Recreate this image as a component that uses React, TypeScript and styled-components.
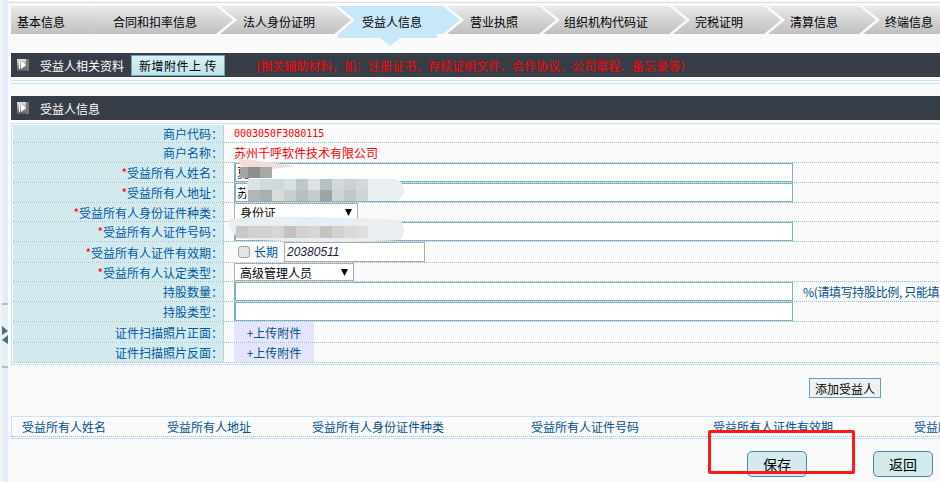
import React from "react";
import styled, { createGlobalStyle } from "styled-components";

const Global = createGlobalStyle`
  html, body { margin: 0; padding: 0; background: #fafafa; }
  * { box-sizing: border-box; }
`;

const CJK = `"Noto Sans CJK SC", "Liberation Sans", sans-serif`;

const Page = styled.div`
  position: relative;
  display: flex;
  width: 940px;
  height: 482px;
  overflow: hidden;
  background: #fafafa;
  font-family: ${CJK};
  font-size: 12px;
  line-height: 14px;
`;

const Rail = styled.div`
  flex: 0 0 8px;
  display: flex;
  flex-direction: column;
  align-items: flex-end;
  padding-top: 303px;
  background: linear-gradient(90deg, #f3f3f3 0 3px, #e3eafc 3px 8px);
`;

const RailHandle = styled.svg`
  display: block;
  width: 8px;
  height: 65px;
`;

const Main = styled.div`
  flex: 1;
  min-width: 0;
  display: flex;
  flex-direction: column;
`;

const TopLine = styled.div`
  height: 1px;
  margin: 2px 0 3px;
  background: #dcdcdc;
`;

const Body = styled.div`
  display: flex;
  flex-direction: column;
  padding-left: 3px;
`;

const Tabs = styled.div`
  display: flex;
  height: 28px;
`;

const TabItem = styled.div<{ $w: number }>`
  position: relative;
  flex: 0 0 ${(p) => p.$w}px;
  margin-right: -17px;
`;

const TabShape = styled.div<{ $active?: boolean; $first?: boolean; $indent: number }>`
  height: 28px;
  display: flex;
  align-items: center;
  padding: 3px 0 0 ${(p) => p.$indent}px;
  color: #000;
  white-space: nowrap;
  background: ${(p) => (p.$active ? "#c8e7f9" : "linear-gradient(180deg, #e9e9e9, #bfbfbf)")};
  clip-path: ${(p) =>
    p.$first
      ? "polygon(0 0, calc(100% - 17px) 0, 100% 50%, calc(100% - 17px) 100%, 0 100%)"
      : "polygon(0 0, calc(100% - 21px) 0, calc(100% - 4px) 50%, calc(100% - 21px) 100%, 0 100%, 17px 50%)"};
`;

const TabPointer = styled.div`
  position: absolute;
  left: 0;
  top: 28px;
  width: 99px;
  height: 12px;
  background: #c8e7f9;
  clip-path: polygon(0 0, 100% 0, 100% 4px, 62px 4px, 52px 12px, 42px 4px, 0 4px);
`;

const Bar = styled.div<{ $top: number }>`
  display: flex;
  align-items: center;
  height: 24px;
  margin-top: ${(p) => p.$top}px;
  padding-left: 6px;
  background: #363d47;
  color: #fff;
  white-space: nowrap;
`;

const BarLabel = styled.span`
  padding-top: 1px;
`;

const BarIcon = styled.svg`
  flex: 0 0 12px;
  width: 12px;
  height: 12px;
  margin-right: 11px;
`;

const UploadExtra = styled.div`
  display: flex;
  align-items: center;
  justify-content: center;
  width: 94px;
  height: 21px;
  margin-left: 7px;
  padding-top: 1px;
  color: #000;
  letter-spacing: 0.5px;
  border: 1px solid #6fa7b8;
  background: linear-gradient(180deg, #d9f0f5, #bfe3ea);
`;

const BarNote = styled.span`
  margin-left: 31px;
  padding-top: 1px;
  color: #ff0000;
`;

const ThinBox = styled.div`
  height: 4px;
  margin: 3px -10px 0 0;
  border: 1px solid #c8e0f8;
  border-width: 1px 0;
`;

const FormBox = styled.div`
  margin: 3px -10px 0 0;
  padding: 1px 0 1px 1px;
  border: 1px solid #c8e0f8;
`;

const Row = styled.div<{ $h: number }>`
  display: flex;
  height: ${(p) => p.$h}px;
  border-bottom: 1px dotted #93bccb;
`;

const Label = styled.div`
  flex: 0 0 211px;
  display: flex;
  align-items: center;
  justify-content: flex-end;
  padding-top: 1px;
  background: #d2eaee;
  border-right: 1px dotted #93bccb;
  color: #0058a0;
  white-space: nowrap;
`;

const Star = styled.span`
  color: #ff0000;
`;

const Value = styled.div`
  flex: 1;
  min-width: 0;
  display: flex;
  align-items: center;
  padding-left: 10px;
  white-space: nowrap;
`;

const Code = styled.span`
  padding-top: 1px;
  color: #ff0000;
  font-family: "DejaVu Sans Mono", monospace;
  font-size: 10px;
`;

const RedName = styled.span`
  padding-top: 1px;
  color: #ff0000;
`;

const TextInput = styled.input`
  flex: 0 0 559px;
  height: 19px;
  padding: 0 1px;
  margin: 0;
  border: 1px solid #7fb0bf;
  border-left-width: 2px;
  outline: none;
  background: #fff;
  color: #000;
  font: 12px ${CJK};
`;

const FakeSelect = styled.div<{ $w: number }>`
  display: flex;
  align-items: center;
  justify-content: space-between;
  width: ${(p) => p.$w}px;
  height: 18px;
  padding: 1px 5px 0;
  background: #fff;
  border: 1px solid #a9a9a9;
  color: #000;
`;

const Caret = styled.svg`
  width: 7px;
  height: 7px;
`;

const Check = styled.input`
  appearance: none;
  width: 12px;
  height: 12px;
  margin: 0 4px 0 4px;
  background: #e4e4e4;
  border: 1px solid #a3a3a3;
  border-radius: 3px;
`;

const Long = styled.span`
  color: #0058a0;
  margin-right: 6px;
`;

const DateInput = styled.input`
  width: 141px;
  height: 20px;
  padding: 0 2px;
  margin: 0;
  background: #fff;
  border: 1px solid #a9a9a9;
  outline: none;
  color: #1a1a40;
  font: italic 12px "Liberation Sans", sans-serif;
`;

const Hint = styled.span`
  flex: 0 0 auto;
  margin-left: 10px;
  padding-top: 1px;
  color: #00508c;
  letter-spacing: -0.35px;
`;

const UploadCell = styled.div`
  display: flex;
  align-items: center;
  justify-content: center;
  width: 80px;
  height: 100%;
  padding-top: 1px;
  background: #e4e4fa;
  color: #00508c;
`;

const ActionRow = styled.div`
  display: flex;
  justify-content: flex-end;
  padding: 13px 59px 0 0;
`;

const AddButton = styled.button`
  width: 72px;
  height: 20px;
  padding: 0;
  background: #f0f0f0;
  border: 1px solid #5f9fd0;
  color: #000;
  font: 12px ${CJK};
`;

const ListHead = styled.div`
  margin: 18px -10px 0 0;
  height: 23px;
  padding-bottom: 1px;
  border: 1px solid #c8e0f8;
  border-right: 0;
`;

const ListRow = styled.div`
  display: flex;
  align-items: center;
  height: 20px;
  border-bottom: 1px dotted #93bccb;
  color: #00508c;
  white-space: nowrap;
`;

const ListCell = styled.div<{ $w: number }>`
  flex: 0 0 ${(p) => p.$w}px;
  padding-left: 10px;
`;

const Footer = styled.div`
  display: flex;
  justify-content: flex-end;
  gap: 66px;
  padding: 12px 7px 0 0;
`;

const RoundButton = styled.button`
  width: 60px;
  height: 26px;
  padding: 0;
  background: #d2eaee;
  border: 1px solid #4f85ad;
  border-radius: 5px;
  color: #000;
  font: 14px ${CJK};
`;

const Redaction = styled.svg`
  position: absolute;
  left: 0;
  top: 0;
  width: 940px;
  height: 482px;
  pointer-events: none;
`;

const Annotation = styled.div`
  position: absolute;
  left: 708px;
  top: 430px;
  width: 147px;
  height: 44px;
  border: 3px solid #ff1a1a;
  border-radius: 2px;
  pointer-events: none;
`;

const tabs = [
  { t: "基本信息", left: 11, text: 17 },
  { t: "合同和扣率信息", left: 88, text: 113 },
  { t: "法人身份证明", left: 220, text: 243 },
  { t: "受益人信息", left: 338, text: 362, active: true },
  { t: "营业执照", left: 447, text: 470 },
  { t: "组织机构代码证", left: 543, text: 564 },
  { t: "完税证明", left: 673, text: 695 },
  { t: "清算信息", left: 768, text: 790 },
  { t: "终端信息", left: 863, text: 885 },
];

const SectionIcon = ({ id }: { id: string }) => (
  <BarIcon viewBox="0 0 12 12">
    <defs>
      <linearGradient id={id} x1="0" y1="0" x2="0" y2="1">
        <stop offset="0" stopColor="#e4e4e4" />
        <stop offset="1" stopColor="#5a5a5a" />
      </linearGradient>
    </defs>
    <rect width="12" height="12" fill={`url(#${id})`} />
    <rect x="9" width="3" height="12" fill="#777" />
    <path d="M4 2 L9 6 L4 10 Z" fill="#fff" />
    <rect x="2" y="2" width="1" height="8" fill="#fff" />
  </BarIcon>
);

const CaretIcon = () => (
  <Caret viewBox="0 0 7 7">
    <path d="M0 0 H7 L3.5 7 Z" fill="#000" />
  </Caret>
);

const Mosaic = ({ x, y, h, colors }: { x: number; y: number; h: number; colors: string[] }) => (
  <>
    {colors.map((c, i) => (
      <rect key={i} x={x + i * 12} y={y} width="12" height={h} fill={c} />
    ))}
  </>
);

const listCols = [
  { t: "受益所有人姓名", w: 145 },
  { t: "受益所有人地址", w: 145 },
  { t: "受益所有人身份证件种类", w: 219 },
  { t: "受益所有人证件号码", w: 182 },
  { t: "受益所有人证件有效期", w: 201 },
  { t: "受益所有人", w: 80 },
];

export default function App() {
  return (
    <Page>
      <Global />
      <Rail>
        <RailHandle viewBox="0 0 8 65">
          <rect x="1" y="0" width="7" height="65" fill="#e6f0f3" />
          <rect x="2" y="0" width="6" height="2" fill="#b8bcbc" />
          <rect x="2" y="63" width="6" height="2" fill="#b8bcbc" />
          <path d="M2 23 L8 28 L2 32 Z" fill="#44707f" />
          <path d="M8 32 L2 37 L8 41 Z" fill="#44707f" />
        </RailHandle>
      </Rail>
      <Main>
        <TopLine />
        <Body>
          <Tabs>
            {tabs.map((tab, i) => {
              const next = tabs[i + 1] ? tabs[i + 1].left : 958;
              return (
                <TabItem key={tab.t} $w={next - tab.left + 17}>
                  <TabShape $active={tab.active} $first={i === 0} $indent={tab.text - tab.left}>
                    {tab.t}
                  </TabShape>
                  {tab.active && <TabPointer />}
                </TabItem>
              );
            })}
          </Tabs>
          <Bar $top={19}>
            <SectionIcon id="ic1" />
            <BarLabel>受益人相关资料</BarLabel>
            <UploadExtra>新增附件上 传</UploadExtra>
            <BarNote>(相关辅助材料，如：注册证书、存续证明文件、合作协议、公司章程、备忘录等）</BarNote>
          </Bar>
          <ThinBox />
          <Bar $top={12}>
            <SectionIcon id="ic2" />
            <BarLabel>受益人信息</BarLabel>
          </Bar>
          <FormBox>
            <Row $h={18}>
              <Label>商户代码：</Label>
              <Value><Code>0003050F3080115</Code></Value>
            </Row>
            <Row $h={20}>
              <Label>商户名称：</Label>
              <Value><RedName>苏州千呼软件技术有限公司</RedName></Value>
            </Row>
            <Row $h={20}>
              <Label><Star>*</Star>受益所有人姓名：</Label>
              <Value><TextInput readOnly value="夏" /></Value>
            </Row>
            <Row $h={20}>
              <Label><Star>*</Star>受益所有人地址：</Label>
              <Value><TextInput readOnly value="苏" /></Value>
            </Row>
            <Row $h={19}>
              <Label><Star>*</Star>受益所有人身份证件种类：</Label>
              <Value>
                <FakeSelect $w={124}>身份证<CaretIcon /></FakeSelect>
              </Value>
            </Row>
            <Row $h={20}>
              <Label><Star>*</Star>受益所有人证件号码：</Label>
              <Value><TextInput readOnly value="" /></Value>
            </Row>
            <Row $h={21}>
              <Label><Star>*</Star>受益所有人证件有效期：</Label>
              <Value>
                <Check type="checkbox" readOnly />
                <Long>长期</Long>
                <DateInput readOnly value="20380511" />
              </Value>
            </Row>
            <Row $h={19}>
              <Label><Star>*</Star>受益所有人认定类型：</Label>
              <Value>
                <FakeSelect $w={120}>高级管理人员<CaretIcon /></FakeSelect>
              </Value>
            </Row>
            <Row $h={20}>
              <Label>持股数量：</Label>
              <Value>
                <TextInput readOnly value="" />
                <Hint>%(请填写持股比例, 只能填</Hint>
              </Value>
            </Row>
            <Row $h={20}>
              <Label>持股类型：</Label>
              <Value><TextInput readOnly value="" /></Value>
            </Row>
            <Row $h={21}>
              <Label>证件扫描照片正面：</Label>
              <Value><UploadCell>+上传附件</UploadCell></Value>
            </Row>
            <Row $h={20}>
              <Label>证件扫描照片反面：</Label>
              <Value><UploadCell>+上传附件</UploadCell></Value>
            </Row>
          </FormBox>
          <ActionRow>
            <AddButton>添加受益人</AddButton>
          </ActionRow>
          <ListHead>
            <ListRow>
              {listCols.map((c) => (
                <ListCell key={c.t} $w={c.w}>{c.t}</ListCell>
              ))}
            </ListRow>
          </ListHead>
          <Footer>
            <RoundButton>保存</RoundButton>
            <RoundButton>返回</RoundButton>
          </Footer>
        </Body>
      </Main>
      <Redaction viewBox="0 0 940 482">
        <path d="M238 158 L296 166 L248 172 Q238 166 238 158 Z" fill="#f3dcdc" />
        <Mosaic x={248} y={167} h={11} colors={["#8d8d8d", "#a8a8a8"]} />
        <rect x="240" y="167" width="8" height="11" fill="#a5a5a5" />
        <rect x="245" y="179" width="159" height="22" rx="11" fill="#e8eef1" />
        <Mosaic x={248} y={179} h={11} colors={["#dde3e5", "#d0d9dc", "#ccd8db", "#d8e0e2", "#bcc8cc", "#dde3e5", "#b5c1c5", "#d0d8da", "#c8d2d5", "#d0d8da"]} />
        <Mosaic x={248} y={190} h={11} colors={["#b0b7ba", "#aab1b4", "#dadcda", "#c8d0ce", "#b8bfc2", "#c8ccce", "#9aa3a7", "#cfd4d6", "#c0c6c9", "#d0d4d6"]} />
        <path d="M229 219 Q270 214 400 220 Q408 232 400 240 Q330 244 240 239 Q229 232 229 219 Z" fill="#e8eef1" />
        <Mosaic x={236} y={226} h={12} colors={["#c8c6c6", "#d0d0d0", "#cfcfcf", "#d5d5d5", "#c8c0bd", "#d2d2d2", "#d5d5d5", "#c8c4c0", "#d2d2d2", "#d8d8d8", "#dedede"]} />
      </Redaction>
      <Annotation />
    </Page>
  );
}
